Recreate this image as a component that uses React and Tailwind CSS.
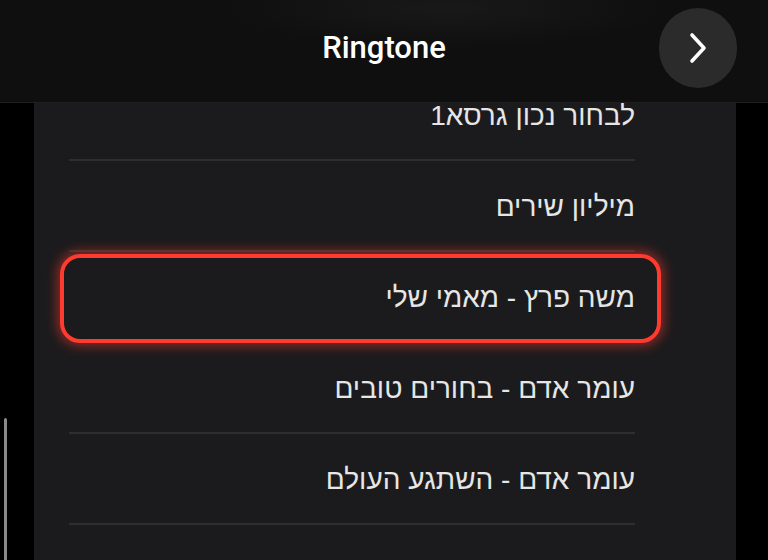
const songs = [
  "לבחור נכון גרסא1",
  "מיליון שירים",
  "משה פרץ - מאמי שלי",
  "עומר אדם - בחורים טובים",
  "עומר אדם - השתגע העולם",
  "עדן חסון - שמיים",
];

const SELECTED = 2;

function ChevronRight() {
  return (
    <svg width="20" height="34" viewBox="0 0 20 34" fill="none">
      <path d="M4 4l12 13L4 30" stroke="white" strokeWidth="3.6" strokeLinecap="round" strokeLinejoin="round" />
    </svg>
  );
}

function SongRow({ title, selected, last }) {
  return (
    <div className="relative h-[91px] ml-[35px] mr-[101px] flex items-center justify-start">
      <span className="text-[28px] leading-none text-[#e6e6e6] whitespace-nowrap">{title}</span>
      {selected && (
        <div className="absolute left-[-9px] right-[-26px] top-[2px] bottom-0 rounded-[20px] border-[4px] border-[#ff3b30] shadow-[0_0_12px_3px_rgba(255,59,48,0.5)]" />
      )}
      {!last && !selected && (
        <div className="absolute left-0 right-0 bottom-0 h-[2px] bg-[#2e2e30]" />
      )}
    </div>
  );
}

export default function App() {
  return (
    <div className="w-[768px] h-[560px] bg-black overflow-hidden flex flex-col" style={{ fontFamily: '"Liberation Sans", "DejaVu Sans", sans-serif' }}>
      <header className="relative z-10 h-[103px] shrink-0 bg-[#0f0f0f] bg-[radial-gradient(ellipse_220px_40px_at_445px_8px,#191919,transparent)] border-b border-[#1e1e1e] flex items-center justify-center">
        <h1 className="text-[31px] font-medium text-white -mt-[6px]" style={{ fontFamily: 'Roboto, "Liberation Sans", sans-serif' }}>
          Ringtone
        </h1>
        <button className="absolute right-[31px] top-[8px] w-[78px] h-[80px] rounded-full bg-[#2b2b2b] flex items-center justify-center">
          <ChevronRight />
        </button>
      </header>

      <div className="flex-1 flex min-h-0">
        <div className="w-[34px] shrink-0 relative">
          <div className="absolute left-[4px] top-[315px] w-[3px] h-[200px] rounded-full bg-[#8a8a8a]" />
        </div>
        <div className="flex-1 bg-[#1b1b1d] overflow-hidden">
          <div dir="rtl" className="mt-[-33px]">
            {songs.map((s, i) => (
              <SongRow
                key={s}
                title={s}
                selected={i === SELECTED}
                last={i === songs.length - 1}
              />
            ))}
          </div>
        </div>
        <div className="w-[32px] shrink-0" />
      </div>
    </div>
  );
}
